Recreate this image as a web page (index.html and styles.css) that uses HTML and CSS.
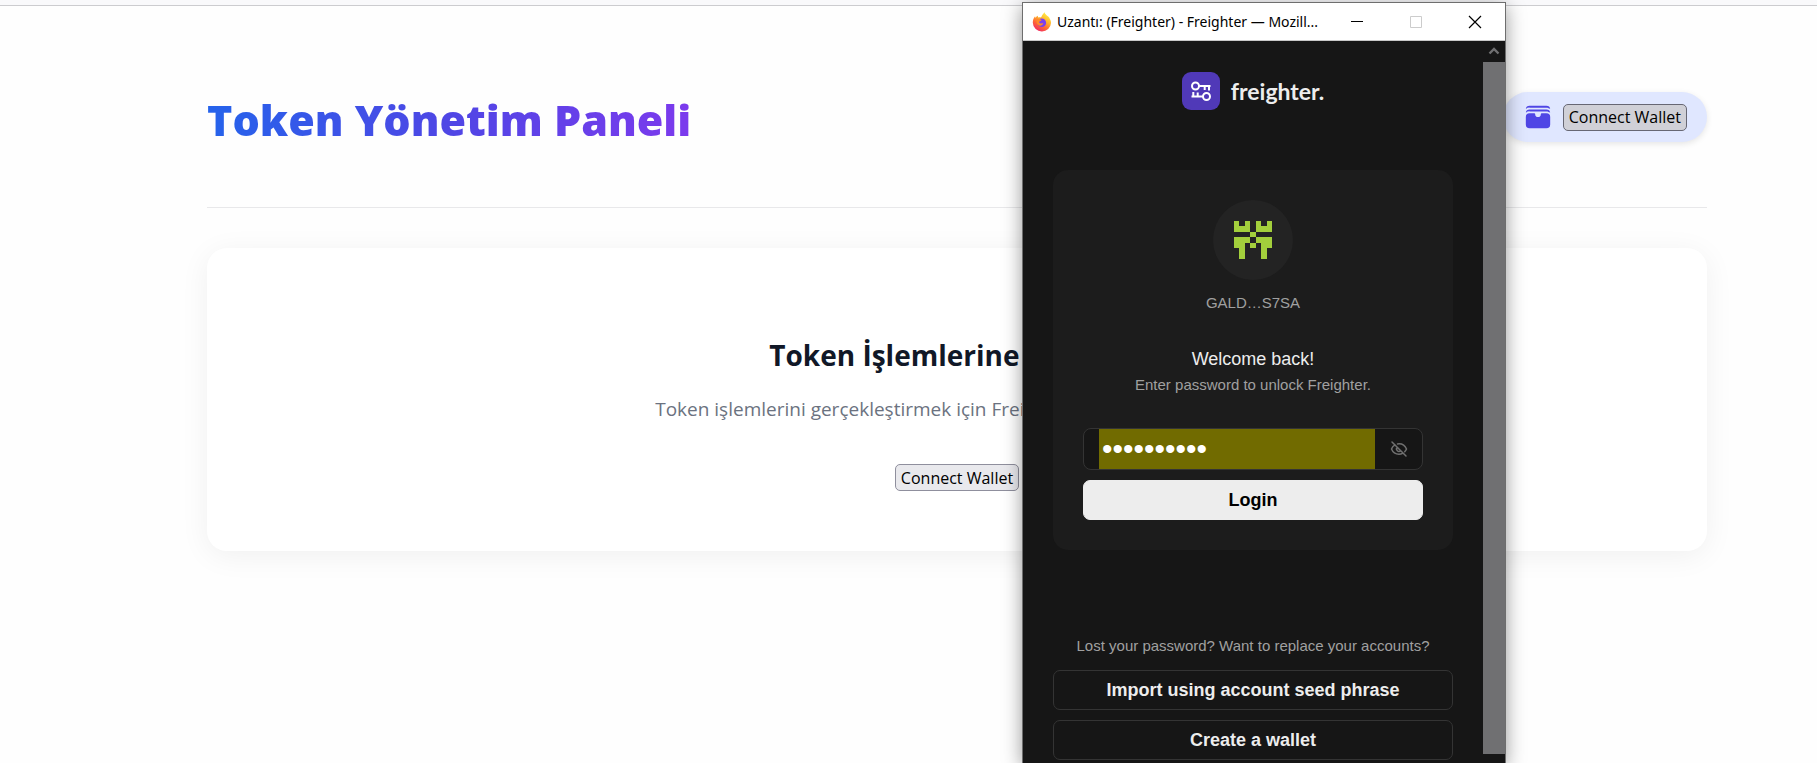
FILE: index.html
```html
<!DOCTYPE html>
<html lang="tr">
<head>
<meta charset="utf-8">
<title>Token Yönetim Paneli</title>
<link rel="stylesheet" href="styles.css">
</head>
<body>
<div class="toolbar-edge"></div>
<main class="page">
  <header class="page-header">
    <h1 class="page-title">Token Yönetim Paneli</h1>
    <div class="wallet-pill">
      <svg class="wallet-icon" viewBox="0 0 24 24" fill="currentColor" aria-hidden="true"><path d="M2.273 5.625A4.483 4.483 0 0 1 5.25 4.5h13.5c1.141 0 2.183.425 2.977 1.125A3 3 0 0 0 18.75 3H5.25a3 3 0 0 0-2.977 2.625ZM2.273 8.625A4.483 4.483 0 0 1 5.25 7.5h13.5c1.141 0 2.183.425 2.977 1.125A3 3 0 0 0 18.75 6H5.25a3 3 0 0 0-2.977 2.625ZM5.25 9a3 3 0 0 0-3 3v6a3 3 0 0 0 3 3h13.5a3 3 0 0 0 3-3v-6a3 3 0 0 0-3-3H15a.75.75 0 0 0-.75.75 2.25 2.25 0 0 1-4.5 0A.75.75 0 0 0 9 9H5.25Z"/></svg>
      <button class="connect connect-pressed" type="button">Connect Wallet</button>
    </div>
  </header>
  <section class="start-card">
    <h2 class="start-title">Token İşlemlerine Başlayın</h2>
    <p class="start-text">Token işlemlerini gerçekleştirmek için Freighter cüzdanınızı bağlayın.</p>
    <button class="connect" type="button">Connect Wallet</button>
  </section>
</main>

<section class="popup" aria-label="Freighter">
  <div class="titlebar">
    <svg class="firefox" viewBox="0 0 20 20" aria-hidden="true">
      <defs>
        <linearGradient id="fx" x1="0.8" y1="0.05" x2="0.25" y2="1"><stop offset="0" stop-color="#fff04a"/><stop offset=".35" stop-color="#ffb52c"/><stop offset=".65" stop-color="#ff6a33"/><stop offset="1" stop-color="#f0246a"/></linearGradient>
      </defs>
      <path fill="url(#fx)" d="M12.600.3c.2 1.700 1.700 2.500 2.900 3.800 1.100.7 1.900 1.500 2.200 2.700.9 1.200 1.300 2.500 1.300 4.200A9 9 0 0 1 10 19.500 9 9 0 0 1 .8 10.800c0-2.600.7-4.700 2.300-6.500 0 .7.100 1.200.4 1.500.7-.9 1.400-1.500 2.500-2 -.2.700-.1 1.300.2 1.800.8-.3 1.800-.4 2.700-.2 1.200-1 1-2.700 3.700-5.100Z"/>
      <circle cx="9.800" cy="10.800" r="4.300" fill="#7b3ff0"/>
      <path fill="#ff8a2b" d="M5 7.300c1.800-.8 3.400-.3 4.600 1l-1.500 1c-.9.200-1.100.800-.7 1.500 1 1.300 2.600.2 4 .5-.6 1.800-2.200 2.700-3.900 2.400C5 13 4 10 5 7.300Z"/>
    </svg>
    <span class="window-title">Uzantı: (Freighter) - Freighter — Mozill...</span>
    <div class="window-buttons">
      <button type="button" aria-label="Minimize"><svg viewBox="0 0 14 14"><path d="M1 6.500h12" stroke="#000"/></svg></button>
      <button type="button" aria-label="Maximize" disabled><svg viewBox="0 0 14 14"><path d="M1.500 1.500h11v11h-11z" stroke="#ccc" fill="none"/></svg></button>
      <button type="button" aria-label="Close"><svg viewBox="0 0 14 14"><path d="M1 1l12 12M13 1L1 13" stroke="#000" stroke-width="1.200"/></svg></button>
    </div>
  </div>
  <div class="popup-body">
    <div class="extension">
      <div class="brand">
        <svg class="brand-mark" viewBox="0 0 38 38" aria-hidden="true">
          <rect width="38" height="38" rx="9" fill="#5039b8"/>
          <g fill="none" stroke="#fff" stroke-width="2"><circle cx="13.500" cy="14" r="3.500"/><path d="M17 14h11.500M27 14v4.500M22.700 14v4"/><circle cx="24.500" cy="24.500" r="3.500"/><path d="M21 24.500H9.500M11.300 24.500v-4.500M15.700 24.500v-4"/></g>
        </svg>
        <span class="brand-name">freighter.</span>
      </div>
      <form class="unlock-card">
        <div class="avatar">
          <svg viewBox="0 0 7 7" fill="#a3cf3c" shape-rendering="crispEdges" aria-hidden="true"><path d="M0 0h1v1h1V0h1v2H0zM4 0h1v1h1V0h1v2H4zM3 2h1v1H3zM0 3h3v1H2v3H1V5H0zM4 3h3v2H6v2H5V4H4zM3 4h1v1H3z"/></svg>
        </div>
        <p class="account">GALD…S7SA</p>
        <h2 class="welcome">Welcome back!</h2>
        <label class="hint" for="password">Enter password to unlock Freighter.</label>
        <div class="password-box">
          <input class="password" id="password" type="password" value="freighter1">
          <button class="reveal" type="button" aria-label="Show password">
            <svg viewBox="0 0 18 18" fill="none" stroke="#707070" stroke-width="1.500" stroke-linecap="round" aria-hidden="true"><path d="M2 2l14 14M5 4.800C3.200 5.800 2 7.500 1.500 9c1.200 3 4.200 5.200 7.500 5.200 1.300 0 2.500-.3 3.600-.9M7.500 3.900c4-.6 7.500 1.500 9 5.100-.4 1-1 1.900-1.800 2.700M7.300 7.300a2.400 2.400 0 0 0 3.400 3.400"/></svg>
          </button>
        </div>
        <button class="login" type="button">Login</button>
      </form>
      <p class="lost">Lost your password? Want to replace your accounts?</p>
      <div class="choices">
        <button class="choice" type="button">Import using account seed phrase</button>
        <button class="choice" type="button">Create a wallet</button>
      </div>
    </div>
    <div class="scrollbar">
      <svg class="scroll-arrow" viewBox="0 0 12 10" aria-hidden="true"><path d="M1.500 7.500L6 3l4.500 4.500" fill="none" stroke="#707072" stroke-width="2.400"/></svg>
      <div class="scroll-thumb"></div>
    </div>
  </div>
</section>
</body>
</html>
```
FILE: styles.css
```css
* { box-sizing: border-box; }

body {
  position: relative;
  margin: 0;
  min-height: 100vh;
  overflow: hidden;
  background: #fefefe;
  font-family: "Open Sans", "Noto Sans", sans-serif;
}

h1, h2, p { margin: 0; }
button { font-family: inherit; cursor: pointer; }
svg { display: block; }

.toolbar-edge {
  height: 6px;
  background: #f9f9fb;
  border-bottom: 1px solid #cccccf;
}

.page { padding: 46px 110px 0 207px; }

.page-header {
  display: flex;
  justify-content: space-between;
  align-items: flex-start;
  padding: 40px 0 59px;
  border-bottom: 1px solid #e8e8ea;
}

.page-title {
  font-size: 43px;
  line-height: 56px;
  font-weight: 800;
  color: transparent;
  background: linear-gradient(to right, #2563eb, #4f46e5, #7c3aed);
  background-clip: text;
}

.wallet-pill {
  display: flex;
  align-items: center;
  gap: 10px;
  height: 50px;
  padding: 0 20px;
  border-radius: 25px;
  background: #e0e7ff;
  box-shadow: 0 2px 6px rgba(0, 0, 0, .1);
}

.wallet-icon { width: 30px; height: 30px; color: #4f46e5; }

.connect {
  height: 27px;
  padding: 0 5px;
  border: 1px solid #8f8f9d;
  border-radius: 5px;
  background: #e9e9ed;
  color: #000;
  font-size: 16px;
  line-height: 24px;
}

.connect-pressed { background: #d0d0d7; border-color: #676774; }

.start-card {
  display: flex;
  flex-direction: column;
  align-items: center;
  margin-top: 40px;
  padding: 84px 40px 60px;
  border-radius: 20px;
  background: #fff;
  box-shadow: 0 5px 30px rgba(0, 0, 0, .06);
}

.start-title { font-size: 28px; line-height: 46px; font-weight: 700; color: #111827; }

.start-text {
  margin: 16px 0 40px;
  font-size: 19px;
  line-height: 30px;
  color: #6b7280;
}

.popup {
  position: absolute;
  top: 2px;
  bottom: 0;
  left: 1022px;
  display: flex;
  flex-direction: column;
  width: 484px;
  border: 1px solid #6e6e6e;
  border-bottom: 0;
  background: #161616;
  box-shadow: 0 4px 18px rgba(0, 0, 0, .4);
}

.titlebar {
  display: flex;
  align-items: center;
  height: 38px;
  flex: none;
  padding: 0 1px 0 9px;
  background: #fff;
  border-bottom: 1px solid #c8c8c8;
}

.firefox { width: 20px; height: 20px; }
.window-title { margin-left: 5px; font-family: "Noto Sans", sans-serif; font-size: 14px; line-height: 20px; color: #000; }
.window-buttons { display: flex; margin-left: auto; }

.window-buttons button {
  display: grid;
  place-items: center;
  width: 59px;
  height: 36px;
  padding: 0;
  border: 0;
  background: none;
}

.window-buttons svg { width: 14px; height: 14px; }

.popup-body { display: flex; flex: 1; min-height: 0; font-family: "Liberation Sans", Arial, sans-serif; }

.extension {
  display: flex;
  flex-direction: column;
  flex: 1;
  min-width: 0;
  padding: 31px 30px 0;
}

.brand { display: flex; align-items: center; justify-content: center; gap: 11px; }
.brand-mark { width: 38px; height: 38px; }
.brand-name { font-family: Lato, sans-serif; font-size: 23px; line-height: 38px; font-weight: 700; color: #ededed; }

.unlock-card {
  display: flex;
  flex-direction: column;
  margin-top: 60px;
  padding: 30px;
  border-radius: 15px;
  background: #1c1c1c;
}

.avatar {
  display: grid;
  place-items: center;
  align-self: center;
  width: 80px;
  height: 80px;
  border-radius: 50%;
  background: #232323;
}

.avatar svg { width: 38px; height: 38px; }

.account, .hint, .lost {
  font-size: 15px;
  line-height: 24px;
  text-align: center;
  color: #a0a0a0;
}

.account { margin-top: 11px; }

.welcome {
  margin-top: 30px;
  font-size: 18px;
  line-height: 28px;
  font-weight: 400;
  text-align: center;
  color: #ededed;
}

.password-box {
  display: flex;
  height: 42px;
  margin: 31px 0 10px;
  padding-left: 15px;
  border: 1px solid #343434;
  border-radius: 8px;
  background: #161616;
}

.password {
  flex: 1;
  width: 100%;
  min-width: 0;
  padding: 0 3px;
  border: 0;
  outline: 0;
  background: #716b00;
  color: #fff;
  font-family: "Liberation Sans", Arial, sans-serif;
  font-size: 30px;
}

.reveal {
  display: grid;
  place-items: center;
  flex: none;
  width: 47px;
  padding: 0;
  border: 0;
  background: none;
}

.reveal svg { width: 18px; height: 18px; }

.login, .choice {
  height: 40px;
  border: 1px solid #343434;
  border-radius: 7px;
  background: #161616;
  color: #ededed;
  font-size: 18px;
  font-weight: 700;
}

.login { border-color: #ededed; background: #ededed; color: #000; }
.lost { margin-top: 84px; }
.choices { display: flex; flex-direction: column; gap: 10px; margin-top: 12px; }

.scrollbar {
  display: flex;
  flex-direction: column;
  align-items: center;
  flex: none;
  width: 22px;
  padding-bottom: 9px;
}

.scroll-arrow { width: 12px; height: 10px; margin: 5px 0 6px; }
.scroll-thumb { flex: 1; width: 100%; background: #707072; }
```
